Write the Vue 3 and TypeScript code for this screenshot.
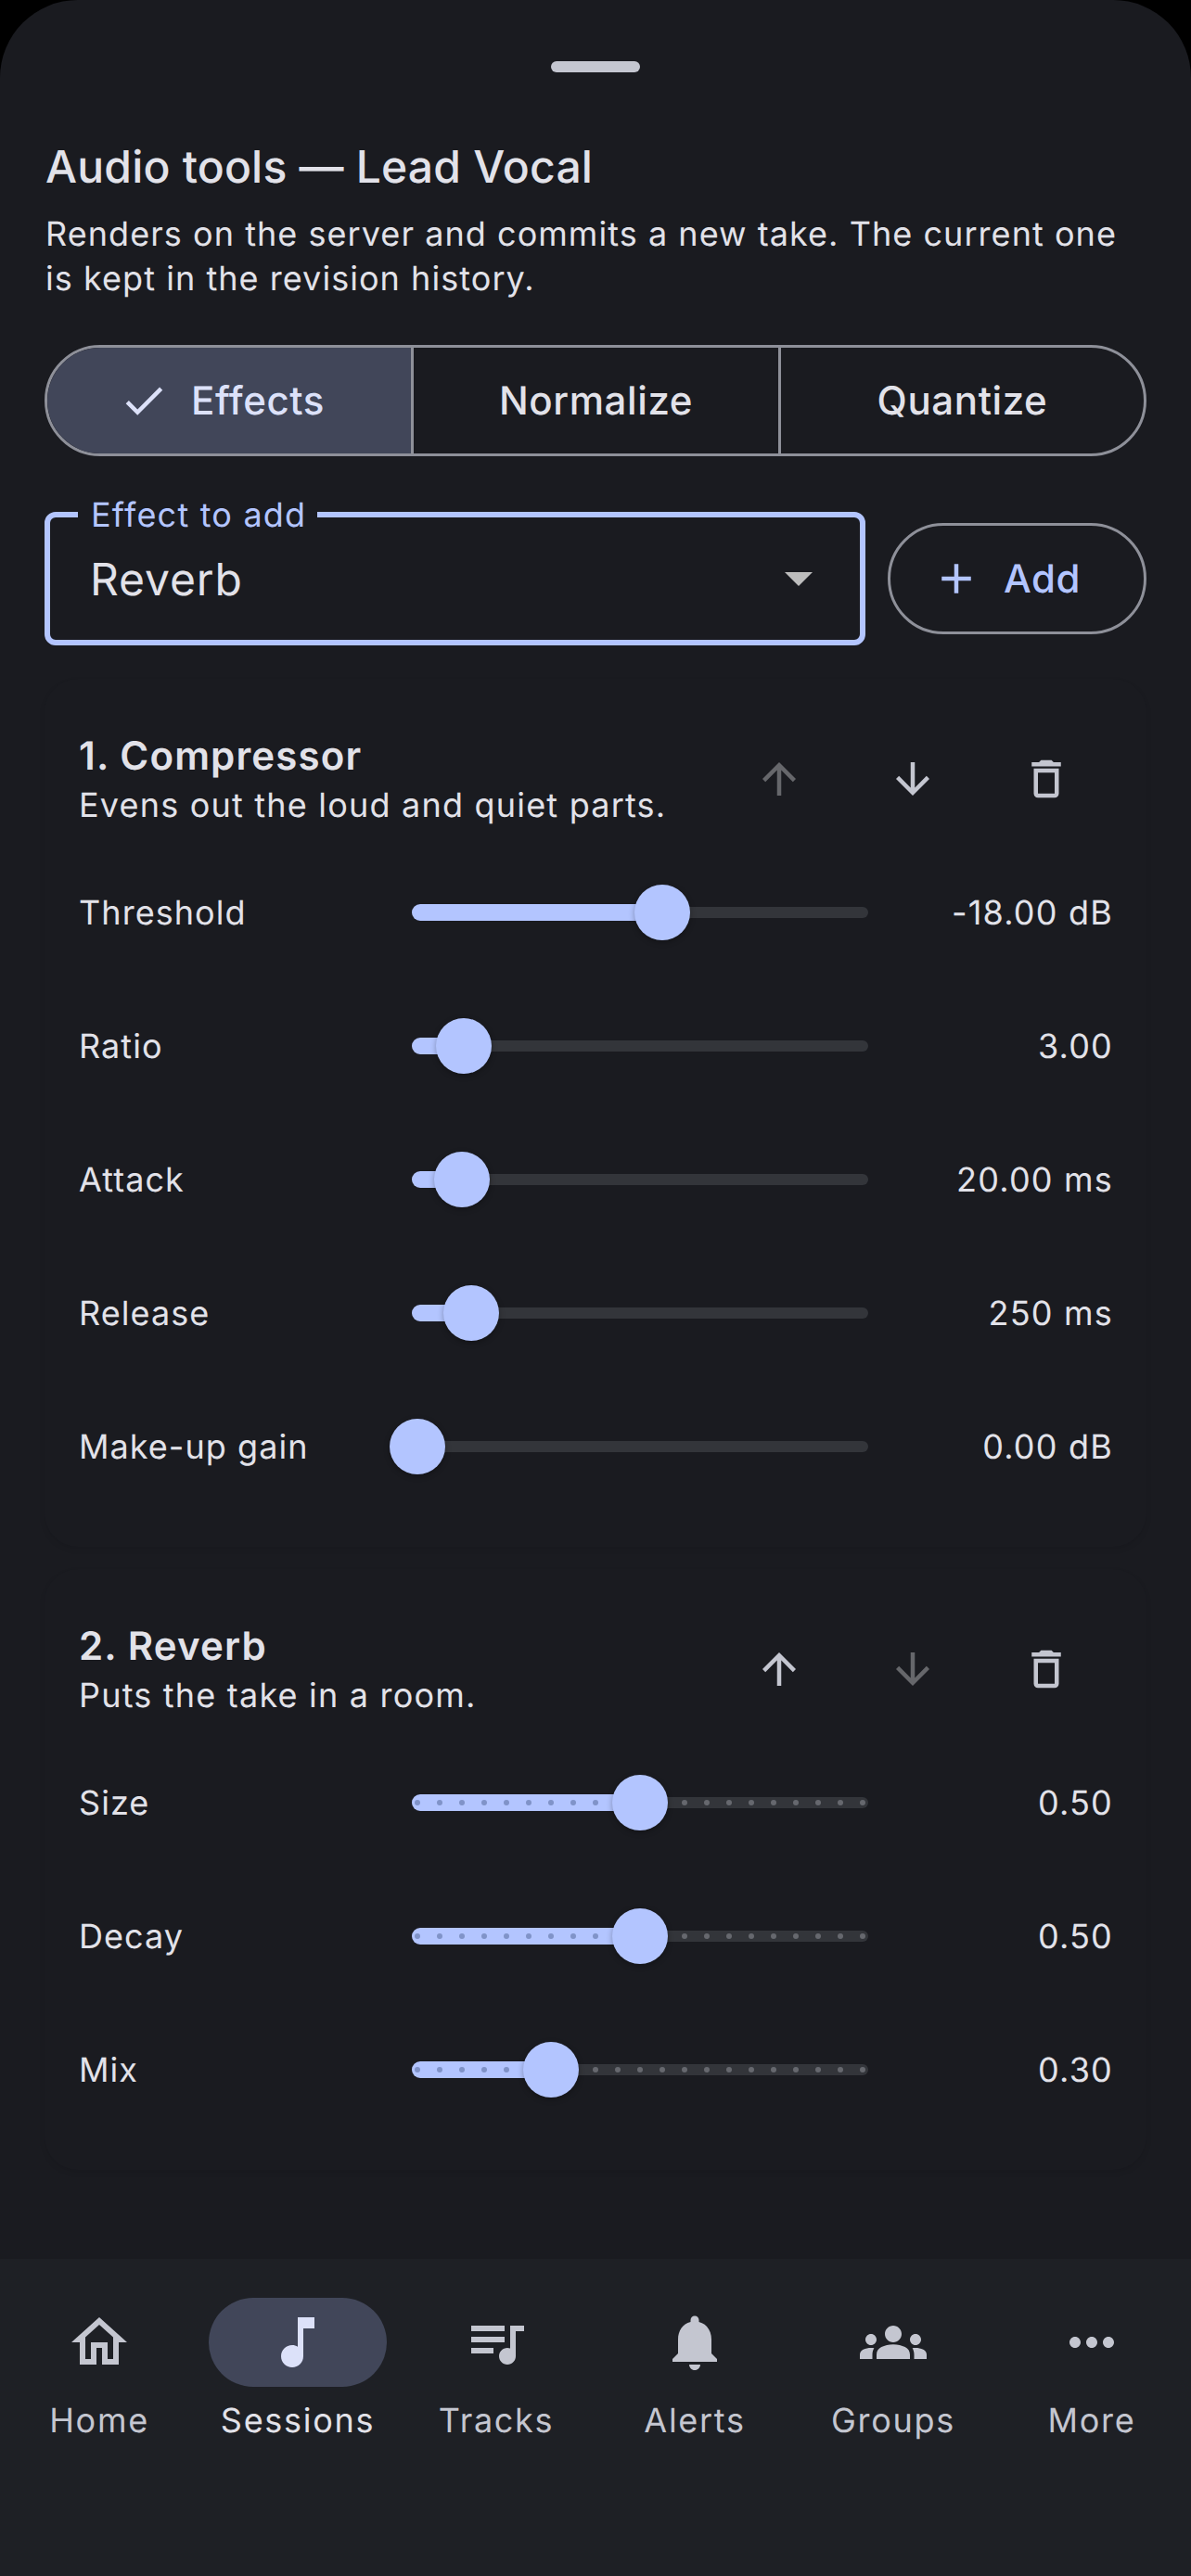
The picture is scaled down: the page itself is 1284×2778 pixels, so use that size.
<script setup lang="ts">
import { computed } from 'vue'

interface Param {
  label: string
  value: string
  pos: number
}

interface Effect {
  title: string
  desc: string
  canUp: boolean
  canDown: boolean
  stepped: boolean
  params: Param[]
}

const tabs = ['Effects', 'Normalize', 'Quantize']

const effects: Effect[] = [
  {
    title: '1. Compressor',
    desc: 'Evens out the loud and quiet parts.',
    canUp: false,
    canDown: true,
    stepped: false,
    params: [
      { label: 'Threshold', value: '-18.00 dB', pos: 0.55 },
      { label: 'Ratio', value: '3.00', pos: 0.105 },
      { label: 'Attack', value: '20.00 ms', pos: 0.1 },
      { label: 'Release', value: '250 ms', pos: 0.1206 },
      { label: 'Make-up gain', value: '0.00 dB', pos: 0 },
    ],
  },
  {
    title: '2. Reverb',
    desc: 'Puts the take in a room.',
    canUp: true,
    canDown: false,
    stepped: true,
    params: [
      { label: 'Size', value: '0.50', pos: 0.5 },
      { label: 'Decay', value: '0.50', pos: 0.5 },
      { label: 'Mix', value: '0.30', pos: 0.3 },
    ],
  },
]

const navItems = computed(() => [
  { label: 'Home', active: false, d: 'M12 5.69l5 4.5V18h-2v-6H9v6H7v-7.81l5-4.5M12 3L2 12h3v8h6v-6h2v6h6v-8h3L12 3z' },
  { label: 'Sessions', active: true, d: 'M12 3v10.55c-.59-.34-1.27-.55-2-.55-2.21 0-4 1.79-4 4s1.79 4 4 4 4-1.79 4-4V7h4V3h-6z' },
  { label: 'Tracks', active: false, d: 'M15 6H3v2h12V6zm0 4H3v2h12v-2zM3 16h8v-2H3v2zM17 6v8.18c-.31-.11-.65-.18-1-.18-1.66 0-3 1.34-3 3s1.34 3 3 3 3-1.34 3-3V8h3V6h-5z' },
  { label: 'Alerts', active: false, d: 'M12 22c1.1 0 2-.9 2-2h-4c0 1.1.89 2 2 2zm6-6v-5c0-3.07-1.64-5.64-4.5-6.32V4c0-.83-.67-1.5-1.5-1.5s-1.5.67-1.5 1.5v.68C7.63 5.36 6 7.92 6 11v5l-2 2v1h16v-1l-2-2z' },
  { label: 'Groups', active: false, d: 'M12 12.75c1.63 0 3.07.39 4.24.9 1.08.48 1.76 1.56 1.76 2.73V18H6v-1.61c0-1.18.68-2.26 1.76-2.73 1.17-.52 2.61-.91 4.24-.91zM4 13c1.1 0 2-.9 2-2s-.9-2-2-2-2 .9-2 2 .9 2 2 2zm1.13 1.1c-.37-.06-.74-.1-1.13-.1-.99 0-1.93.21-2.78.58C.48 14.9 0 15.62 0 16.43V18h4.5v-1.61c0-.83.23-1.61.63-2.29zM20 13c1.1 0 2-.9 2-2s-.9-2-2-2-2 .9-2 2 .9 2 2 2zm4 3.43c0-.81-.48-1.53-1.22-1.85-.85-.37-1.79-.58-2.78-.58-.39 0-.76.04-1.13.1.4.68.63 1.46.63 2.29V18H24v-1.57zM12 6c1.66 0 3 1.34 3 3s-1.34 3-3 3-3-1.34-3-3 1.34-3 3-3z' },
  { label: 'More', active: false, d: 'M6 10c-1.1 0-2 .9-2 2s.9 2 2 2 2-.9 2-2-.9-2-2-2zm12 0c-1.1 0-2 .9-2 2s.9 2 2 2 2-.9 2-2-.9-2-2-2zm-6 0c-1.1 0-2 .9-2 2s.9 2 2 2 2-.9 2-2-.9-2-2-2z' },
])

// thumb travels 480px, inset 6px from each end of the 492px rail
function thumbX(pos: number): number {
  return 6 + pos * 480
}

const stops = Array.from({ length: 21 }, (_, i) => i / 20)
</script>

<template>
  <div class="phone">
    <div class="sheet">
      <div class="handle" />
      <h1 class="title">Audio tools — Lead Vocal</h1>
      <p class="lead">Renders on the server and commits a new take. The current one is kept in the revision history.</p>

      <div class="segments">
        <div v-for="(tab, i) in tabs" :key="tab" class="segment" :class="{ selected: i === 0 }">
          <svg v-if="i === 0" class="check" viewBox="0 0 24 24"><path d="M9 16.17L4.83 12l-1.42 1.41L9 19 21 7l-1.41-1.41z" /></svg>
          <span>{{ tab }}</span>
        </div>
      </div>

      <div class="add-row">
        <div class="field">
          <span class="field-label">Effect to add</span>
          <span class="field-value">Reverb</span>
          <svg class="arrow" viewBox="0 0 30 15"><path d="M0 0h30L15 15z" /></svg>
        </div>
        <div class="add-btn">
          <svg class="plus" viewBox="0 0 24 24"><path d="M19 13h-6v6h-2v-6H5v-2h6V5h2v6h6v2z" /></svg>
          <span>Add</span>
        </div>
      </div>

      <section v-for="fx in effects" :key="fx.title" class="card">
        <header class="card-head">
          <div class="card-text">
            <h2>{{ fx.title }}</h2>
            <p>{{ fx.desc }}</p>
          </div>
          <div class="icon-btn" :class="{ off: !fx.canUp }">
            <svg viewBox="0 0 24 24"><path d="M4 12l1.41 1.41L11 7.83V20h2V7.83l5.58 5.59L20 12l-8-8-8 8z" /></svg>
          </div>
          <div class="icon-btn" :class="{ off: !fx.canDown }">
            <svg viewBox="0 0 24 24"><path d="M20 12l-1.41-1.41L13 16.17V4h-2v12.17l-5.58-5.59L4 12l8 8 8-8z" /></svg>
          </div>
          <div class="icon-btn">
            <svg viewBox="0 0 24 24"><path d="M6 19c0 1.1.9 2 2 2h8c1.1 0 2-.9 2-2V7H6v12zM8 9h8v10H8V9zm7.5-5l-1-1h-5l-1 1H5v2h14V4h-3.5z" /></svg>
          </div>
        </header>

        <div v-for="p in fx.params" :key="p.label" class="param">
          <span class="param-label">{{ p.label }}</span>
          <div class="slider">
            <div class="rail" />
            <div class="fill" :style="{ width: thumbX(p.pos) + 'px' }" />
            <div v-if="fx.stepped" class="dots">
              <i v-for="s in stops" :key="s" :class="{ on: s <= p.pos }" />
            </div>
            <div class="thumb" :style="{ left: thumbX(p.pos) - 30 + 'px' }" />
          </div>
          <span class="param-value">{{ p.value }}</span>
        </div>
      </section>
    </div>

    <nav class="nav">
      <div v-for="item in navItems" :key="item.label" class="nav-item" :class="{ active: item.active }">
        <div class="pill">
          <svg viewBox="0 0 24 24"><path :d="item.d" /></svg>
        </div>
        <span>{{ item.label }}</span>
      </div>
    </nav>
  </div>
</template>

<style>
html,
body {
  margin: 0;
  background: #000;
}
</style>

<style scoped>
.phone {
  width: 1284px;
  height: 2778px;
  display: flex;
  flex-direction: column;
  overflow: hidden;
  background: #1a1b20;
  border-radius: 84px 84px 0 0;
  font-family: Inter, "Noto Sans", sans-serif;
  color: #e2e2e9;
  text-rendering: geometricPrecision;
}

.sheet {
  flex: 1;
  padding: 66px 48px 0;
}

.handle {
  width: 96px;
  height: 12px;
  margin: 0 auto;
  border-radius: 6px;
  background: #c4c6d0;
}

.title {
  margin: 66px 0 0 1px;
  font-size: 48px;
  line-height: 72px;
  font-weight: 500;
  letter-spacing: 0.2px;
}

.lead {
  margin: 12px 0 0 1px;
  font-size: 36px;
  line-height: 48px;
  letter-spacing: 1.05px;
  color: #e2e2e9;
}

.segments {
  display: grid;
  grid-template-columns: 392px 396px 394px;
  height: 120px;
  margin-top: 48px;
  box-sizing: border-box;
  border: 3px solid #8e9099;
  border-radius: 60px;
  overflow: hidden;
}

.segment {
  display: flex;
  align-items: center;
  justify-content: center;
  gap: 24px;
  font-size: 42px;
  font-weight: 500;
  letter-spacing: 0.6px;
  border-left: 3px solid #8e9099;
}

.segment:first-child {
  border-left: 0;
}

.segment.selected {
  padding-right: 16px;
  background: #414659;
  color: #dce1f9;
}

.check {
  width: 54px;
  height: 54px;
  fill: #dce1f9;
}

.add-row {
  display: flex;
  align-items: center;
  gap: 24px;
  margin-top: 60px;
}

.field {
  position: relative;
  flex: 1;
  display: flex;
  align-items: center;
  justify-content: space-between;
  height: 144px;
  box-sizing: border-box;
  padding: 0 51px 0 43px;
  border: 6px solid #b3c5ff;
  border-radius: 12px;
}

.field-label {
  position: absolute;
  left: 30px;
  top: -27px;
  padding: 0 12px 0 14px;
  background: #1a1b20;
  font-size: 36px;
  line-height: 48px;
  letter-spacing: 1.2px;
  color: #b3c5ff;
}

.field-value {
  font-size: 48px;
  letter-spacing: 0.9px;
}

.arrow {
  width: 30px;
  height: 15px;
  fill: #bdbdbd;
}

.add-btn {
  display: flex;
  align-items: center;
  gap: 24px;
  width: 279px;
  height: 120px;
  box-sizing: border-box;
  padding-left: 44px;
  border: 3px solid #8e9099;
  border-radius: 60px;
  font-size: 42px;
  font-weight: 500;
  letter-spacing: 0.5px;
  color: #b3c5ff;
}

.plus {
  width: 54px;
  height: 54px;
  fill: #b3c5ff;
}

.card {
  margin-top: 36px;
  padding: 36px;
  border-radius: 36px;
  background: #1a1b20;
  box-shadow: 0 3px 6px rgba(0, 0, 0, 0.08);
}

.card + .card {
  margin-top: 24px;
}

.card-head {
  display: flex;
  align-items: center;
  height: 144px;
}

.card-text {
  flex: 1;
  margin-left: 1px;
}

.card-text h2 {
  margin: 0;
  font-size: 42px;
  line-height: 54px;
  font-weight: 600;
  letter-spacing: 1.15px;
}

.card-text p {
  margin: 1px 0 0;
  font-size: 36px;
  line-height: 48px;
  letter-spacing: 1.2px;
}

.icon-btn {
  display: flex;
  align-items: center;
  justify-content: center;
  width: 144px;
  height: 144px;
}

.icon-btn svg {
  width: 54px;
  height: 54px;
  fill: #c4c6d0;
}

.icon-btn.off svg {
  fill: #66676b;
}

.param {
  display: flex;
  align-items: center;
  height: 144px;
  font-size: 36px;
  letter-spacing: 1.05px;
}

.param-label {
  width: 359px;
  margin-left: 1px;
}

.slider {
  position: relative;
  width: 492px;
  height: 60px;
}

.rail,
.fill,
.dots {
  position: absolute;
  left: 0;
  top: 50%;
  transform: translateY(-50%);
}

.rail {
  width: 100%;
  height: 12px;
  border-radius: 6px;
  background: #33353a;
}

.fill {
  height: 18px;
  border-radius: 9px;
  background: #b3c5ff;
}

.dots {
  right: 0;
  display: flex;
  justify-content: space-between;
  padding: 0 3px;
}

.dots i {
  width: 6px;
  height: 6px;
  border-radius: 50%;
  background: #66686e;
}

.dots i.on {
  background: #8093c8;
}

.thumb {
  position: absolute;
  top: 0;
  width: 60px;
  height: 60px;
  border-radius: 50%;
  background: #b3c5ff;
  box-shadow: 0 2px 6px rgba(0, 0, 0, 0.3);
}

.param-value {
  flex: 1;
  text-align: right;
  letter-spacing: 1.2px;
}

.nav {
  display: flex;
  height: 342px;
  box-sizing: border-box;
  padding-top: 42px;
  background: #1e2025;
}

.nav-item {
  flex: 1;
  display: flex;
  flex-direction: column;
  align-items: center;
  font-size: 36px;
  line-height: 48px;
  letter-spacing: 1.7px;
  color: #c4c6d0;
}

.pill {
  display: flex;
  align-items: center;
  justify-content: center;
  width: 192px;
  height: 96px;
  margin-bottom: 12px;
  border-radius: 48px;
}

.pill svg {
  width: 72px;
  height: 72px;
  fill: #c4c6d0;
}

.nav-item.active {
  color: #e2e2e9;
}

.nav-item.active .pill {
  background: #414659;
}

.nav-item.active .pill svg {
  fill: #dce1f9;
}
</style>
